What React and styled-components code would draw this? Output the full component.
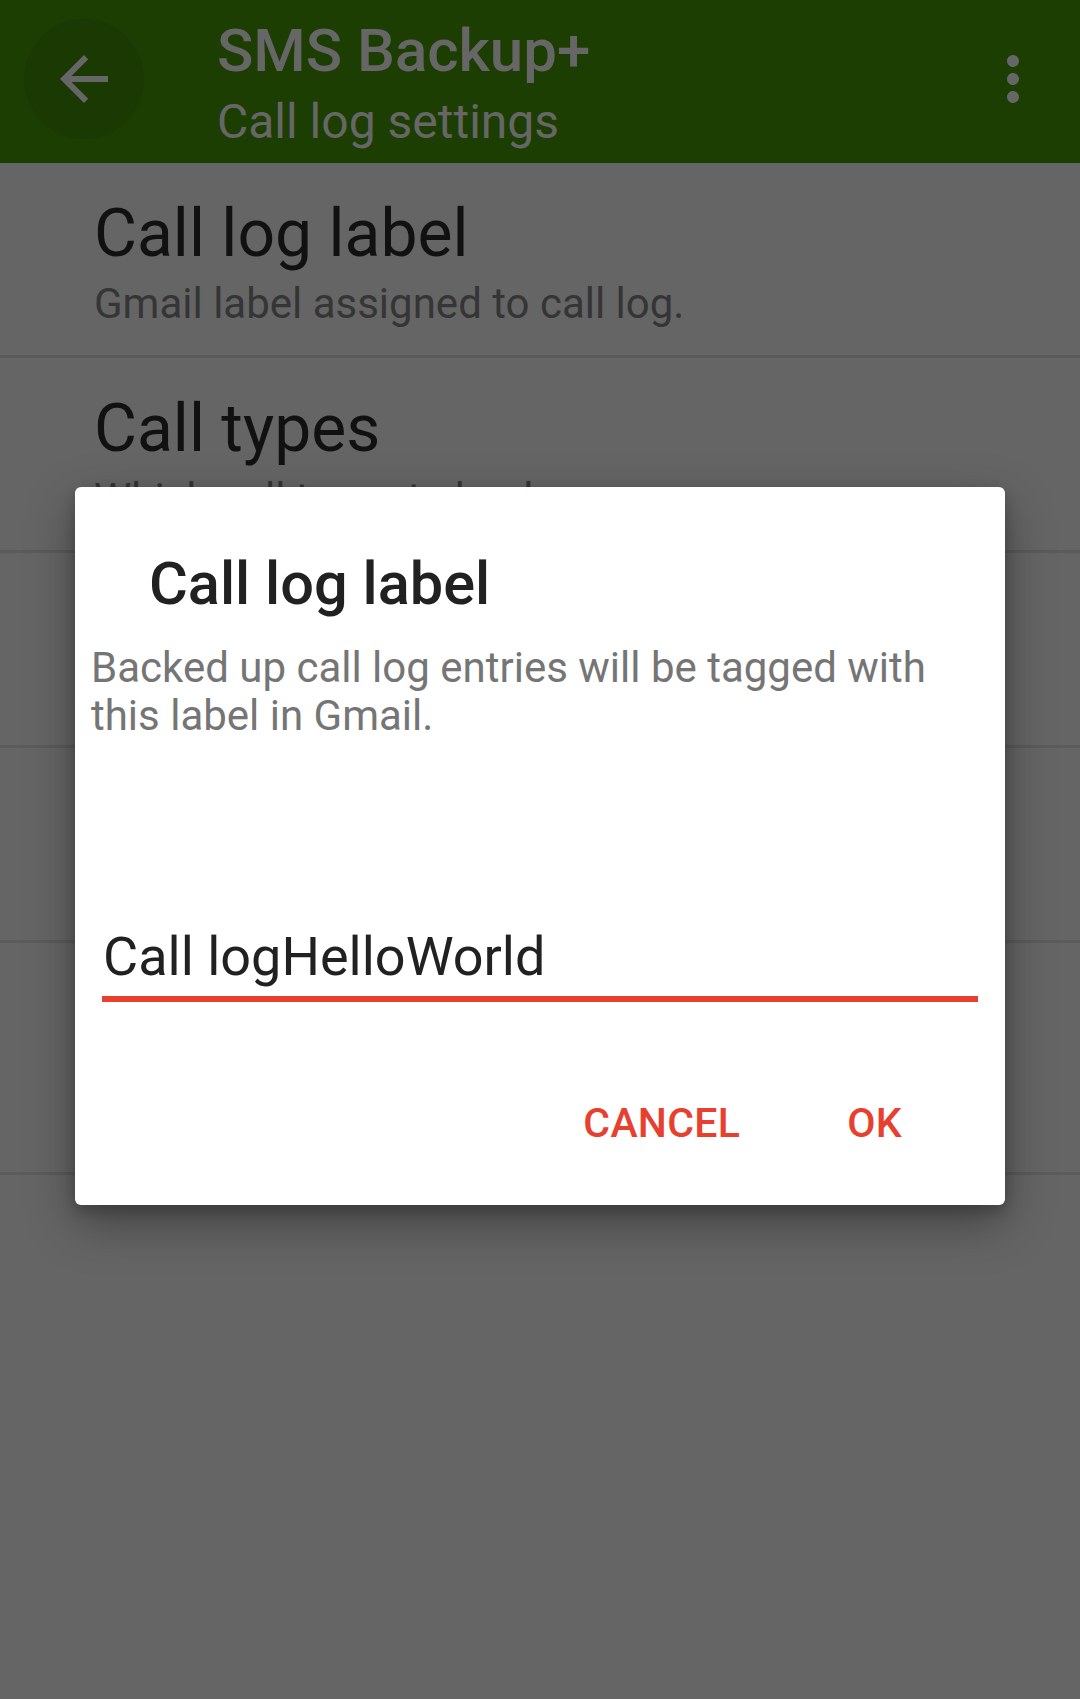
import React from "react";
import styled, { createGlobalStyle } from "styled-components";

const Global = createGlobalStyle`
  html, body { margin: 0; padding: 0; }
  body { font-family: Roboto, "Noto Sans", "Liberation Sans", sans-serif; background: #656565; }
  * { box-sizing: border-box; }
`;

const Screen = styled.div`
  position: relative;
  width: 1080px;
  min-height: 1699px;
  background: #656565;
  overflow: hidden;
`;

const Toolbar = styled.header`
  height: 163px;
  background: #1d3e03;
  display: flex;
  align-items: flex-start;
  padding-top: 15px;
`;

const BackButton = styled.div`
  width: 120px;
  height: 120px;
  margin-top: 4px;
  margin-left: 24px;
  border-radius: 50%;
  background: #1a3903;
  display: flex;
  align-items: center;
  justify-content: center;
  flex: none;
`;

const TitleBlock = styled.div`
  margin-left: 73px;
  flex: 1;
  display: flex;
  flex-direction: column;
  gap: 8px;
`;

const AppTitle = styled.div`
  font-size: 60px;
  line-height: 72px;
  font-weight: 500;
  color: #666666;
`;

const AppSubtitle = styled.div`
  font-size: 48px;
  line-height: 54px;
  color: #666666;
`;

const MenuButton = styled.div`
  width: 72px;
  height: 72px;
  margin-top: 28px;
  margin-right: 31px;
  flex: none;
`;

const List = styled.div`
  display: flex;
  flex-direction: column;
`;

const Item = styled.div`
  padding: 32px 94px ${(p) => (p.$tall ? 9 : 27)}px;
  border-bottom: 3px solid #5b5b5b;
  display: flex;
  flex-direction: column;
  gap: 7px;
`;

const ItemTitle = styled.div`
  font-size: 66px;
  line-height: 78px;
  color: #111111;
`;

const ItemSummary = styled.div`
  font-size: 42px;
  line-height: 48px;
  color: #353535;
`;

const Dialog = styled.div`
  position: absolute;
  left: 75px;
  top: 487px;
  width: 930px;
  height: 718px;
  background: #ffffff;
  border-radius: 6px;
  box-shadow: 0 18px 48px rgba(0, 0, 0, 0.35), 0 6px 14px rgba(0, 0, 0, 0.2);
  display: flex;
  flex-direction: column;
  padding: 62px 0 58px;
`;

const DialogTitle = styled.div`
  padding-left: 74px;
  font-size: 59.5px;
  line-height: 70px;
  font-weight: 500;
  color: #212121;
`;

const Message = styled.div`
  margin-top: 25px;
  padding: 0 16px;
  font-size: 42px;
  line-height: 48px;
  color: #757575;
`;

const Field = styled.div`
  margin: 186px 27px 0;
  padding: 0 0 8px 1px;
  border-bottom: 6px solid #e8402f;
  font-size: 54px;
  line-height: 62px;
  color: #212121;
`;

const Actions = styled.div`
  margin-top: auto;
  display: flex;
  justify-content: flex-end;
  gap: 107px;
  padding-right: 103px;
`;

const ActionButton = styled.div`
  font-size: 41px;
  line-height: 48px;
  font-weight: 500;
  color: #e8402f;
  letter-spacing: 0.3px;
`;

const items = [
  { title: "Call log label", summary: ["Gmail label assigned to call log."] },
  { title: "Call types", summary: ["Which call types to back up"] },
  { title: "Sync calendar", summary: ["Add calls to calendar"] },
  { title: "Calendar", summary: ["Select calendar"] },
  { title: "Call log after", summary: ["Restore call log", "entries"], tall: true },
];

export default function App() {
  return (
    <Screen>
      <Global />
      <Toolbar>
        <BackButton>
          <svg width="72" height="72" viewBox="0 0 24 24">
            <path fill="#666666" d="M20 11H7.83l5.59-5.59L12 4l-8 8 8 8 1.41-1.41L7.83 13H20v-2z" />
          </svg>
        </BackButton>
        <TitleBlock>
          <AppTitle>SMS Backup+</AppTitle>
          <AppSubtitle>Call log settings</AppSubtitle>
        </TitleBlock>
        <MenuButton>
          <svg width="72" height="72" viewBox="0 0 24 24">
            <path
              fill="#666666"
              d="M12 8c1.1 0 2-.9 2-2s-.9-2-2-2-2 .9-2 2 .9 2 2 2zm0 2c-1.1 0-2 .9-2 2s.9 2 2 2 2-.9 2-2-.9-2-2-2zm0 6c-1.1 0-2 .9-2 2s.9 2 2 2 2-.9 2-2-.9-2-2-2z"
            />
          </svg>
        </MenuButton>
      </Toolbar>
      <List>
        {items.map((it) => (
          <Item key={it.title} $tall={it.tall}>
            <ItemTitle>{it.title}</ItemTitle>
            {it.summary.map((s) => (
              <ItemSummary key={s}>{s}</ItemSummary>
            ))}
          </Item>
        ))}
      </List>
      <Dialog>
        <DialogTitle>Call log label</DialogTitle>
        <Message>
          Backed up call log entries will be tagged with
          <br />
          this label in Gmail.
        </Message>
        <Field>Call logHelloWorld</Field>
        <Actions>
          <ActionButton>CANCEL</ActionButton>
          <ActionButton>OK</ActionButton>
        </Actions>
      </Dialog>
    </Screen>
  );
}
